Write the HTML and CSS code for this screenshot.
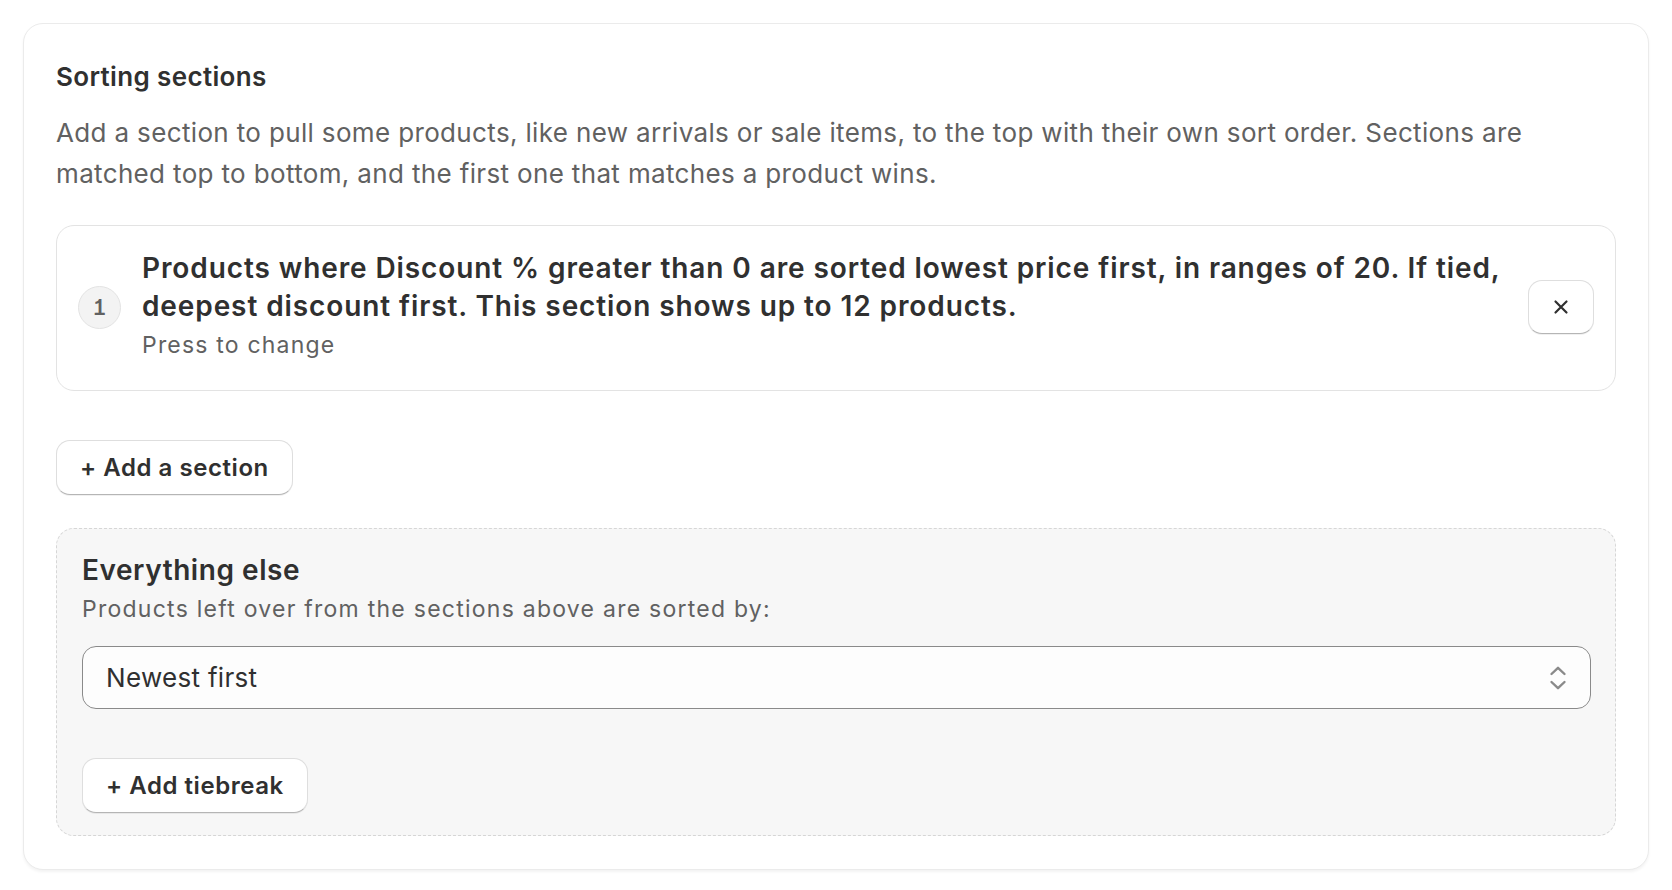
FILE: index.html
```html
<!DOCTYPE html>
<html lang="en">
<head>
<meta charset="utf-8">
<title>Sorting sections</title>
<link rel="stylesheet" href="styles.css">
</head>
<body>
<div class="page">
  <section class="card">
    <h2 class="card-title">Sorting sections</h2>
    <p class="card-desc">Add a section to pull some products, like new arrivals or sale items, to the top with their own sort order. Sections are matched top to bottom, and the first one that matches a product wins.</p>

    <div class="section-list">
      <div class="section-item">
        <span class="section-num">1</span>
        <div class="section-body">
          <div class="section-title">Products where Discount % greater than 0 are sorted lowest price first, in ranges of 20. If tied, deepest discount first. This section shows up to 12 products.</div>
          <div class="section-hint">Press to change</div>
        </div>
        <button class="btn btn-icon" aria-label="Remove section">
          <svg width="16" height="16" viewBox="0 0 16 16" aria-hidden="true"><path d="M2.5 2.5 L13.5 13.5 M13.5 2.5 L2.5 13.5" stroke="#303030" stroke-width="2.2" stroke-linecap="round" fill="none"/></svg>
        </button>
      </div>
    </div>

    <div class="add-row">
      <button class="btn">+ Add a section</button>
    </div>

    <div class="else-box">
      <div class="else-title">Everything else</div>
      <div class="else-sub">Products left over from the sections above are sorted by:</div>
      <div class="select">
        <span class="select-value">Newest first</span>
        <svg class="select-icon" width="24" height="24" viewBox="0 0 24 24" aria-hidden="true"><path d="M5.5 8 L12 1.8 L18.5 8 M5.5 16 L12 22.2 L18.5 16" stroke="#8a8a8a" stroke-width="2.4" stroke-linecap="round" stroke-linejoin="round" fill="none"/></svg>
      </div>
      <div class="tiebreak-row">
        <button class="btn">+ Add tiebreak</button>
      </div>
    </div>
  </section>
</div>
</body>
</html>
```

FILE: styles.css
```css
* { box-sizing: border-box; }

html, body {
  margin: 0;
  padding: 0;
  background: #ffffff;
}

body {
  font-family: Inter, "Noto Sans", "Liberation Sans", sans-serif;
  color: #303030;
}

.page {
  padding: 23px;
}

.card {
  background: #ffffff;
  border: 1px solid #ebebeb;
  border-radius: 20px;
  padding: 35px 32px 33px;
  box-shadow: 0 2px 3px rgba(0, 0, 0, 0.05);
}

.card-title {
  margin: 0;
  font-size: 26px;
  font-weight: 600;
  line-height: 36px;
  color: #303030;
  letter-spacing: 0.35px;
}

.card-desc {
  margin: 18px 0 0;
  font-size: 26px;
  line-height: 40.5px;
  color: #616161;
  letter-spacing: 0.35px;
}

.section-list {
  margin-top: 31px;
}

.section-item {
  display: flex;
  align-items: center;
  gap: 21px;
  border: 1px solid #e3e3e3;
  border-radius: 18px;
  padding: 23px 21px 25px 21px;
  background: #ffffff;
}

.section-num {
  flex: none;
  width: 43px;
  height: 43px;
  border-radius: 50%;
  background: #f3f3f3;
  border: 1.5px solid #e3e3e3;
  display: flex;
  align-items: center;
  justify-content: center;
  font-size: 21px;
  font-weight: 600;
  color: #616161;
  font-feature-settings: "cv01", "tnum";
}

.section-body {
  flex: 1;
  min-width: 0;
}

.section-title {
  font-size: 28px;
  font-weight: 600;
  line-height: 38px;
  color: #303030;
  letter-spacing: 0.9px;
}

.section-hint {
  font-size: 23px;
  line-height: 40px;
  color: #616161;
  letter-spacing: 1.2px;
}

.btn {
  font-family: inherit;
  font-size: 24px;
  font-weight: 600;
  letter-spacing: 0.55px;
  color: #303030;
  background: #ffffff;
  height: 55px;
  padding: 0 23px;
  border: 1px solid #dedede;
  border-bottom-color: #b5b5b5;
  border-radius: 14px;
  box-shadow: 0 1px 0 rgba(0, 0, 0, 0.06);
  cursor: pointer;
  display: inline-flex;
  align-items: center;
}

.btn-icon {
  flex: none;
  width: 66px;
  height: 54px;
  padding: 0;
  justify-content: center;
}

.add-row {
  margin-top: 49px;
}

.else-box {
  margin-top: 33px;
  background: #f7f7f7;
  border: 1.5px dashed #d6d6d6;
  border-radius: 18px;
  padding: 23px 24px 22px 25px;
}

.else-title {
  font-size: 28px;
  font-weight: 600;
  line-height: 36px;
  color: #303030;
  letter-spacing: 0.55px;
}

.else-sub {
  margin-top: 3px;
  font-size: 23px;
  line-height: 36px;
  color: #616161;
  letter-spacing: 1.25px;
}

.select {
  margin-top: 19px;
  height: 63px;
  display: flex;
  align-items: center;
  justify-content: space-between;
  background: #fdfdfd;
  border: 1.5px solid #8a8a8a;
  border-radius: 14px;
  padding: 0 20px 0 23px;
}

.select-value {
  font-size: 26px;
  color: #303030;
  letter-spacing: 0.3px;
}

.select-icon {
  flex: none;
}

.tiebreak-row {
  margin-top: 49px;
}
```
